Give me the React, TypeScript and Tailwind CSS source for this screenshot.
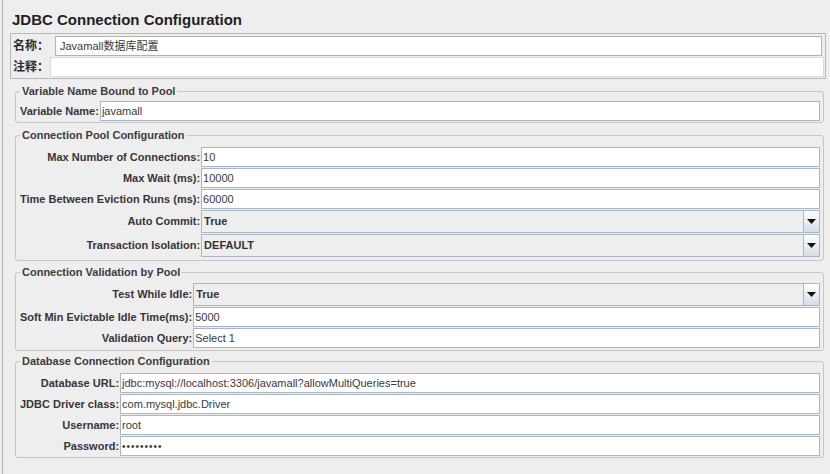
import React from "react";

const Lbl = ({ children }: { children: React.ReactNode }) => (
  <div className="text-right text-[11px] font-bold leading-[13px] text-[#363636] whitespace-nowrap">{children}</div>
);

const Field = ({ value, tracking }: { value: string; tracking?: boolean }) => (
  <div className="h-[20px] bg-white border border-[#a9b6c5] pl-[1px] flex items-center text-[11px] leading-[13px] text-[#3a3a3a] whitespace-nowrap overflow-hidden">
    <span className={tracking ? "tracking-[1px] text-[10px]" : ""}>{value}</span>
  </div>
);

const Combo = ({ value }: { value: string }) => (
  <div className="h-[23px] bg-[#eeeeee] border border-[#a9b6c5] flex items-stretch">
    <div className="flex-1 pl-[2px] flex items-center text-[11px] font-bold leading-[13px] text-[#333333]">{value}</div>
    <div className="w-[16px] border-l border-[#a9b6c5] bg-gradient-to-b from-[#ffffff] to-[#d3dde8] flex items-center justify-center">
      <svg width="9" height="5" viewBox="0 0 9 5">
        <polygon points="0,0 9,0 4.5,5" fill="#111111" />
      </svg>
    </div>
  </div>
);

const Group = ({ title, className, children }: { title: string; className: string; children: React.ReactNode }) => (
  <fieldset className={`ml-[12px] mr-[6px] border border-[#c6c6c6] rounded-[3px] pl-[4px] pr-[3px] ${className}`}>
    <legend className="px-[2px] text-[11px] font-bold leading-[13px] text-[#3c3c3c]">{title}</legend>
    {children}
  </fieldset>
);

export default function App() {
  return (
    <div className="w-[830px] h-[474px] bg-[#eeeeee] pl-[2px] overflow-hidden font-['Liberation_Sans','Noto_Sans_CJK_SC',sans-serif]">
      <div className="h-full border-l border-[#b4b4b4]">
        <div className="h-[33px] pl-[9px] pt-[11px]">
          <div className="text-[15px] font-bold leading-[18px] text-[#222222]">JDBC Connection Configuration</div>
        </div>

        <div className="ml-[7px] mr-[4px] border border-[#b9b9b9] pl-[2px] pt-[2px] pb-[1px] flex flex-col gap-[1px]">
          <div className="flex items-center pr-[3px]">
            <div className="w-[42px] text-[12px] font-bold leading-[14px] text-[#2c2c2c] whitespace-nowrap">名称：</div>
            <div className="flex-1 h-[20px] bg-white border border-[#b2b2b2] pl-[4px] flex items-center text-[11px] text-[#3a3a3a]">Javamall数据库配置</div>
          </div>
          <div className="flex items-center pr-[1px]">
            <div className="w-[37px] text-[12px] font-bold leading-[14px] text-[#2c2c2c] whitespace-nowrap">注释：</div>
            <div className="flex-1 h-[20px] bg-white border border-[#dadada]"></div>
          </div>
        </div>

        <Group title="Variable Name Bound to Pool" className="mt-[6px] pt-[3px] pb-[1px]">
          <div className="grid grid-cols-[auto_1fr] items-center gap-x-[1px]">
            <Lbl>Variable Name:</Lbl>
            <Field value="javamall" />
          </div>
        </Group>

        <Group title="Connection Pool Configuration" className="mt-[6px] pt-[5px] pb-[3px]">
          <div className="grid grid-cols-[auto_1fr] items-center gap-x-[1px] gap-y-[1px]">
            <Lbl>Max Number of Connections:</Lbl>
            <Field value="10" />
            <Lbl>Max Wait (ms):</Lbl>
            <Field value="10000" />
            <Lbl>Time Between Eviction Runs (ms):</Lbl>
            <Field value="60000" />
            <Lbl>Auto Commit:</Lbl>
            <Combo value="True" />
            <Lbl>Transaction Isolation:</Lbl>
            <Combo value="DEFAULT" />
          </div>
        </Group>

        <Group title="Connection Validation by Pool" className="mt-[5px] pt-[4px] pb-[2px]">
          <div className="grid grid-cols-[auto_1fr] items-center gap-x-[1px] gap-y-[1px]">
            <Lbl>Test While Idle:</Lbl>
            <Combo value="True" />
            <Lbl>Soft Min Evictable Idle Time(ms):</Lbl>
            <Field value="5000" />
            <Lbl>Validation Query:</Lbl>
            <Field value="Select 1" />
          </div>
        </Group>

        <Group title="Database Connection Configuration" className="mt-[4px] pt-[5px] pb-[1px]">
          <div className="grid grid-cols-[auto_1fr] items-center gap-x-[1px] gap-y-[1px]">
            <Lbl>Database URL:</Lbl>
            <Field value="jdbc:mysql://localhost:3306/javamall?allowMultiQueries=true" />
            <Lbl>JDBC Driver class:</Lbl>
            <Field value="com.mysql.jdbc.Driver" />
            <Lbl>Username:</Lbl>
            <Field value="root" />
            <Lbl>Password:</Lbl>
            <Field value="•••••••••" tracking />
          </div>
        </Group>
      </div>
    </div>
  );
}
